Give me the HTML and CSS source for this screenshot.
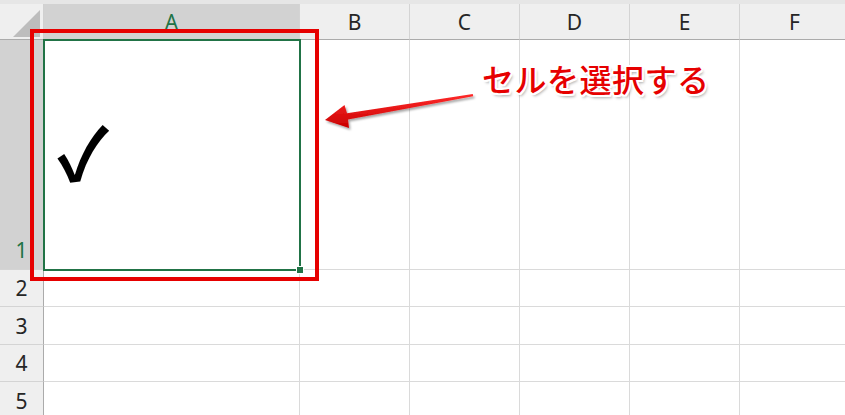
FILE: index.html
```html
<!DOCTYPE HTML>
<html>

<head>
    <meta charset="utf-8">
    <link rel="stylesheet" href="styles.css">
</head>

<body>
    <div class="topbar"></div>

    <div class="sheet">
        <!-- header row -->
        <div class="corner"><span class="tri"></span></div>
        <div class="colhead selected">A</div>
        <div class="colhead">B</div>
        <div class="colhead">C</div>
        <div class="colhead">D</div>
        <div class="colhead">E</div>
        <div class="colhead">F</div>

        <!-- row 1 -->
        <div class="rowhead selected tall">1</div>
        <div class="cell check">✓</div>
        <div class="cell"></div>
        <div class="cell"></div>
        <div class="cell"></div>
        <div class="cell"></div>
        <div class="cell"></div>

        <!-- row 2 -->
        <div class="rowhead">2</div>
        <div class="cell"></div>
        <div class="cell"></div>
        <div class="cell"></div>
        <div class="cell"></div>
        <div class="cell"></div>
        <div class="cell"></div>

        <!-- row 3 -->
        <div class="rowhead">3</div>
        <div class="cell"></div>
        <div class="cell"></div>
        <div class="cell"></div>
        <div class="cell"></div>
        <div class="cell"></div>
        <div class="cell"></div>

        <!-- row 4 -->
        <div class="rowhead">4</div>
        <div class="cell"></div>
        <div class="cell"></div>
        <div class="cell"></div>
        <div class="cell"></div>
        <div class="cell"></div>
        <div class="cell"></div>

        <!-- row 5 -->
        <div class="rowhead">5</div>
        <div class="cell"></div>
        <div class="cell"></div>
        <div class="cell"></div>
        <div class="cell"></div>
        <div class="cell"></div>
        <div class="cell"></div>
    </div>

    <!-- overlays: selection, callout box, arrow, label -->
    <div class="selection"><span class="handle"></span></div>
    <div class="callout-box"></div>

    <svg class="arrow" width="845" height="415" viewBox="0 0 845 415">
        <defs>
            <linearGradient id="arrowFill" x1="0" y1="0" x2="0" y2="1">
                <stop offset="0" stop-color="#ff2a2a" />
                <stop offset="1" stop-color="#c80000" />
            </linearGradient>
            <filter id="arrowShadow" x="-10%" y="-50%" width="120%" height="200%">
                <feDropShadow dx="1.5" dy="2" stdDeviation="1.2" flood-color="#000" flood-opacity="0.35" />
            </filter>
        </defs>
        <polygon fill="url(#arrowFill)" filter="url(#arrowShadow)"
            points="325,120 344.5,105 347,113.3 472.8,94 473.2,96.2 348,119.5 349,128" />
    </svg>

    <div class="label">セルを選択する</div>
</body>

</html>
```

FILE: styles.css
```css
html, body {
    margin: 0;
    padding: 0;
    background: #ffffff;
    overflow: hidden;
    width: 845px;
    height: 415px;
}

body {
    position: relative;
    font-family: "Noto Sans", "Noto Sans CJK JP", sans-serif;
}

.topbar {
    height: 4px;
    background-color: #e6e6e6;
}

.sheet {
    display: grid;
    grid-template-columns: 44px 256px 110px 110px 110px 110px 110px;
    grid-template-rows: 36px 230px 37px 38px 37px 38px;
}

.sheet > div {
    box-sizing: border-box;
}

.corner {
    position: relative;
    background-color: #efefef;
    border-right: 1px solid #d0d0d0;
    border-bottom: 1px solid #ababab;
}

.corner .tri {
    position: absolute;
    left: 13px;
    top: 6px;
    width: 0;
    height: 0;
    border-left: 27px solid transparent;
    border-bottom: 27px solid #bdbdbd;
}

.colhead {
    display: flex;
    align-items: center;
    justify-content: center;
    background-color: #efefef;
    border-right: 1px solid #d4d4d4;
    border-bottom: 1px solid #ababab;
    color: #262626;
    font-size: 21px;
    padding-top: 1px;
}

.rowhead {
    display: flex;
    align-items: center;
    justify-content: center;
    background-color: #efefef;
    border-right: 1px solid #ababab;
    border-bottom: 1px solid #d4d4d4;
    color: #262626;
    font-size: 21px;
}

.rowhead.tall {
    align-items: flex-end;
    padding-bottom: 5px;
}

.selected {
    background-color: #d2d2d2;
    color: #217346;
}

.cell {
    border-right: 1px solid #dadada;
    border-bottom: 1px solid #dadada;
}

.check {
    display: flex;
    align-items: flex-start;
    padding: 74px 0 0 13px;
    font-family: "Noto Sans CJK JP", sans-serif;
    font-size: 72px;
    font-weight: 700;
    line-height: 1;
    color: #000000;
}

.selection {
    position: absolute;
    left: 43px;
    top: 39px;
    width: 254px;
    height: 228px;
    border: 2px solid #217346;
}

.selection .handle {
    position: absolute;
    right: -5px;
    bottom: -5px;
    width: 6px;
    height: 6px;
    background-color: #217346;
    border: 1px solid #ffffff;
}

.callout-box {
    position: absolute;
    left: 30px;
    top: 29px;
    width: 281px;
    height: 244px;
    border: 4px solid #e60000;
}

.arrow {
    position: absolute;
    left: 0;
    top: 0;
}

.label {
    position: absolute;
    left: 482px;
    top: 57px;
    font-family: "Noto Sans CJK JP", sans-serif;
    font-size: 32px;
    font-weight: 500;
    line-height: 42px;
    letter-spacing: 0.5px;
    color: #e60000;
    text-shadow:
        2px 0 0 #fff, -2px 0 0 #fff, 0 2px 0 #fff, 0 -2px 0 #fff,
        1.5px 1.5px 0 #fff, -1.5px 1.5px 0 #fff, 1.5px -1.5px 0 #fff, -1.5px -1.5px 0 #fff,
        2px 3px 3px rgba(0, 0, 0, 0.35);
}
```
